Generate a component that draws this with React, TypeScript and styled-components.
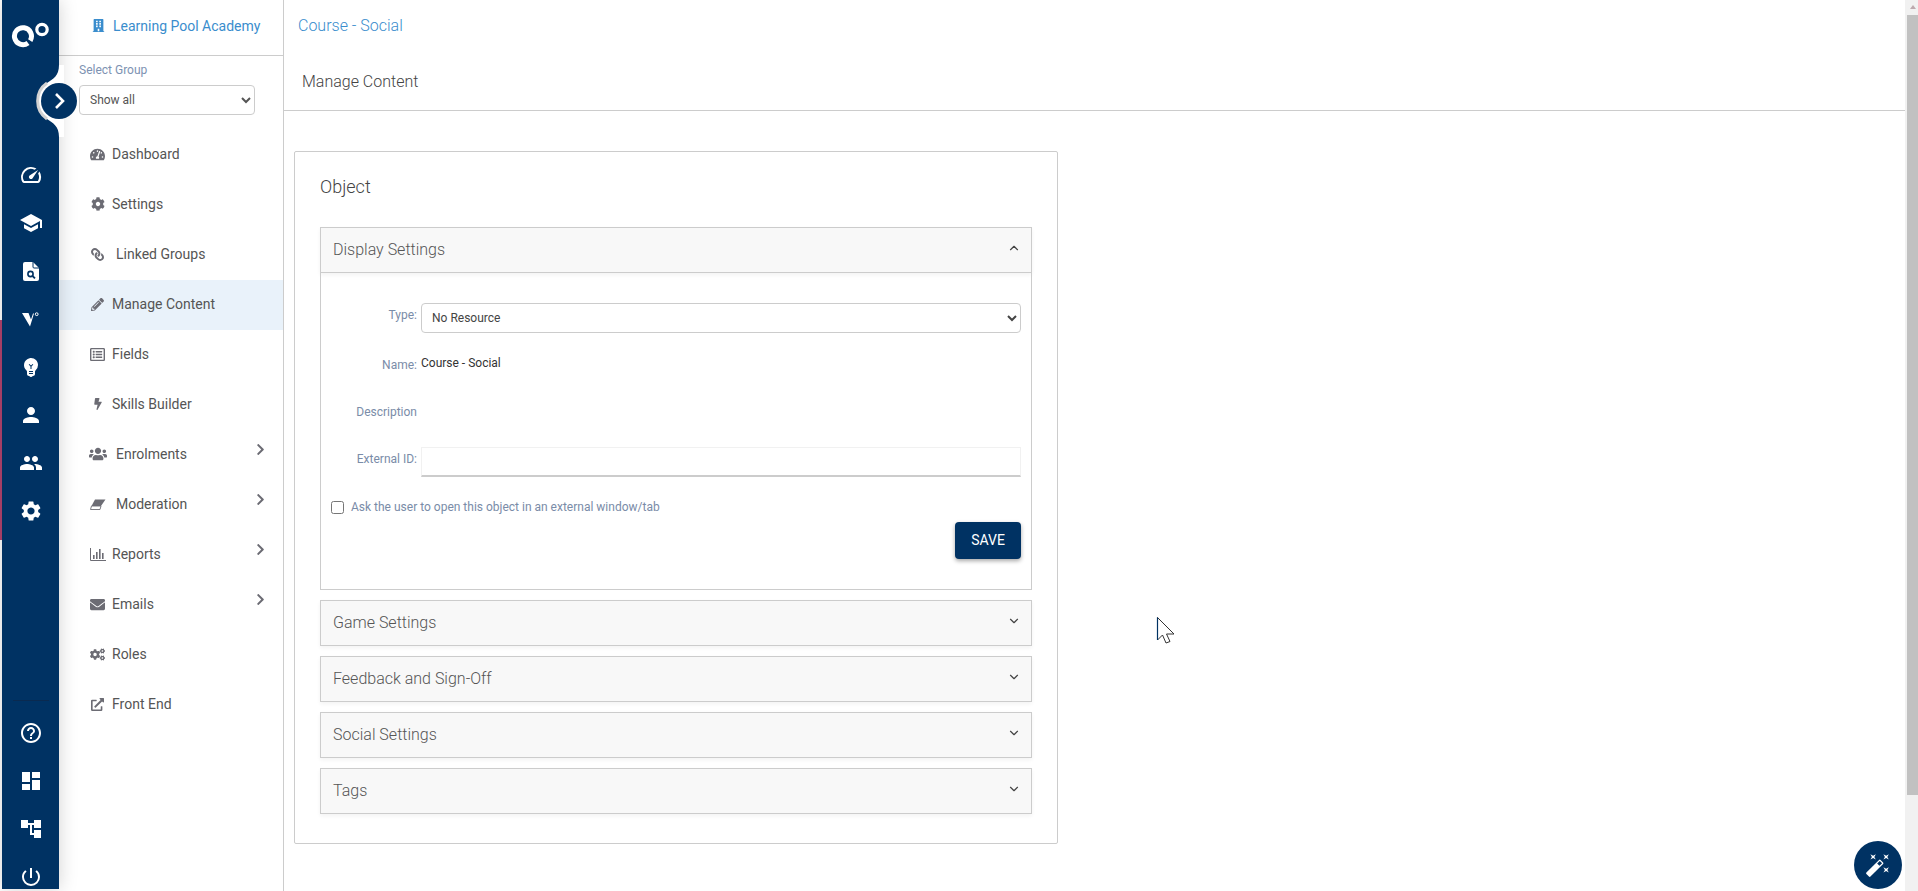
import React from 'react';
import styled, { createGlobalStyle } from 'styled-components';
import { ChevronDown, ChevronUp } from 'lucide-react';
import {
    FaBolt,
    FaBuilding,
    FaChevronRight,
    FaCog,
    FaCogs,
    FaEnvelope,
    FaExternalLinkAlt,
    FaLink,
    FaPencilAlt,
    FaRegListAlt,
    FaTachometerAlt,
    FaUsers,
} from 'react-icons/fa';
import {
    MdAccountTree,
    MdAutoFixHigh,
    MdDashboard,
    MdEmojiObjects,
    MdHelpOutline,
    MdPeople,
    MdPerson,
    MdPowerSettingsNew,
    MdSchool,
    MdSettings,
    MdSpeed,
} from 'react-icons/md';

const navy = '#003263';

const GlobalStyle = createGlobalStyle`
    html, body {
        margin: 0;
        padding: 0;
        height: 100%;
        overflow: hidden;
        background: #fff;
    }
    body {
        font-family: 'Roboto', 'Liberation Sans', sans-serif;
    }
    * {
        box-sizing: border-box;
    }
`;

const Page = styled.div`
    position: relative;
    display: flex;
    width: 1918px;
    height: 891px;
    overflow: hidden;
    background: #fff;
`;

const Strip = styled.div`
    width: 2px;
    padding-top: 320px;
    flex-shrink: 0;
`;

const StripMark = styled.div`
    height: 220px;
    background: #b4446f;
`;

const Rail = styled.aside`
    position: relative;
    z-index: 2;
    width: 57px;
    flex-shrink: 0;
    height: 889px;
    background: ${navy};
    box-shadow: 0 0 18px rgba(0, 0, 0, 0.18);
    display: flex;
    flex-direction: column;
    align-items: center;
    color: #fff;
`;

const LogoBox = styled.div`
    height: 151px;
    padding-top: 18px;
    flex-shrink: 0;
`;

const RailIcon = styled.div`
    height: 48px;
    width: 100%;
    flex-shrink: 0;
    display: flex;
    align-items: center;
    justify-content: center;
    font-size: 24px;
`;

const RailGroup = styled.div`
    width: 100%;
    flex-shrink: 0;
`;

const RailRule = styled.div`
    width: 36px;
    height: 1px;
    flex-shrink: 0;
    background: #0a2a50;
    margin-top: 165px;
    margin-bottom: 8px;
`;

const Toggle = styled.svg`
    position: absolute;
    left: 32px;
    top: 56px;
    z-index: 3;
    overflow: visible;
`;

const Sidebar = styled.nav`
    width: 225px;
    flex-shrink: 0;
    height: 100%;
    border-right: 1px solid #ccc;
`;

const AcademyBar = styled.div`
    height: 56px;
    border-bottom: 1px solid #ccc;
    padding-left: 33px;
    display: flex;
    align-items: center;
    gap: 8px;
    color: #3a8dcd;
    font-size: 14px;
    padding-bottom: 4px;
`;

const GroupBlock = styled.div`
    padding: 6px 0 0 20px;
    height: 74px;
`;

const GroupLabel = styled.div`
    font-size: 12px;
    line-height: 16px;
    color: #7d92b2;
    margin-bottom: 7px;
`;

const GroupSelect = styled.select`
    display: block;
    width: 176px;
    height: 30px;
    font-family: 'Roboto', sans-serif;
    font-size: 12px;
    color: #555;
    background: #fff;
    border: 1px solid #ccc;
    border-radius: 4px;
    padding-left: 6px;
`;

const NavList = styled.ul`
    list-style: none;
    margin: 0;
    padding: 0;
`;

const NavItem = styled.li<{ $active?: boolean }>`
    position: relative;
    height: 50px;
    display: flex;
    align-items: center;
    padding: 0 0 2px 31px;
    font-size: 14px;
    color: #555;
    background: ${(p) => (p.$active ? '#e9f2fa' : 'transparent')};
`;

const NavIcon = styled.span<{ $wide?: boolean; $size?: number; $flip?: boolean }>`
    width: 15px;
    display: flex;
    justify-content: center;
    margin-right: ${(p) => (p.$wide ? '11px' : '7px')};
    color: #6c6c74;
    font-size: ${(p) => p.$size ?? 14}px;
    transform: ${(p) => (p.$flip ? 'scaleX(-1)' : 'none')};

    svg {
        flex-shrink: 0;
    }
`;

const NavArrow = styled.span`
    margin-left: auto;
    margin-right: 16px;
    margin-bottom: 10px;
    color: #6c6c74;
    font-size: 13px;
    display: flex;
`;

const Main = styled.main`
    flex: 1;
    height: 100%;
    min-width: 0;
`;

const TopBar = styled.header`
    height: 111px;
    border-bottom: 1px solid #ccc;
`;

const CourseTitle = styled.div`
    height: 54px;
    padding: 16px 0 0 14px;
    font-size: 16px;
    line-height: 19px;
    font-weight: 300;
    color: #3a8dcd;
`;

const PageTitle = styled.div`
    padding: 18px 0 0 18px;
    font-size: 16px;
    line-height: 19px;
    font-weight: 300;
    color: #444;
`;

const Card = styled.section`
    width: 764px;
    height: 693px;
    margin: 40px 0 0 10px;
    padding: 0 25px;
    border: 1px solid #ccc;
    border-radius: 2px;
`;

const CardTitle = styled.h2`
    margin: 0;
    height: 75px;
    padding-top: 24px;
    font-size: 18px;
    line-height: 22px;
    font-weight: 300;
    color: #444;
`;

const Panel = styled.div`
    margin-bottom: 10px;
    width: 712px;
`;

const PanelHeader = styled.div`
    height: 46px;
    padding: 0 10px 2px 12px;
    display: flex;
    align-items: center;
    justify-content: space-between;
    background: #f8f8f8;
    border: 1px solid #ccc;
    font-size: 16px;
    font-weight: 300;
    color: #555;
    box-shadow: 0 2px 4px rgba(0, 0, 0, 0.05);
`;

const PanelChevron = styled.span`
    display: flex;
    margin-bottom: 2px;
    color: #444;
`;

const PanelBody = styled.div`
    height: 317px;
    padding: 30px 10px 0 0;
    border: 1px solid #ccc;
    border-top: none;
`;

const FormRow = styled.div<{ $height: number }>`
    display: flex;
    height: ${(p) => p.$height}px;
    gap: 4px;
`;

const FieldLabel = styled.label<{ $offset?: number }>`
    width: 96px;
    flex-shrink: 0;
    text-align: right;
    font-size: 12px;
    line-height: 14px;
    color: #7a8ca8;
    padding-top: ${(p) => p.$offset ?? 0}px;
`;

const FieldValue = styled.div`
    font-size: 12px;
    line-height: 14px;
    color: #333;
    padding-top: 6px;
`;

const TypeSelect = styled.select`
    width: 600px;
    height: 30px;
    font-family: 'Roboto', sans-serif;
    font-size: 12px;
    color: #444;
    background: #fff;
    border: 1px solid #ccc;
    border-radius: 4px;
    padding-left: 6px;
`;

const TextField = styled.input`
    width: 600px;
    height: 30px;
    border: 1px solid #f1f1f1;
    border-bottom: 2px solid #ccc;
    outline: none;
    background: #fff;
`;

const CheckRow = styled.label`
    display: flex;
    align-items: center;
    gap: 7px;
    height: 14px;
    margin: 23px 0 0 10px;
    font-size: 12px;
    color: #7a8ca8;
`;

const CheckBox = styled.input`
    width: 13px;
    height: 13px;
    margin: 0;
`;

const SaveRow = styled.div`
    display: flex;
    justify-content: flex-end;
    margin-top: 8px;
`;

const SaveButton = styled.button`
    width: 66px;
    height: 37px;
    border: none;
    border-radius: 4px;
    background: ${navy};
    color: #fff;
    font-family: 'Roboto', sans-serif;
    font-size: 14px;
    font-weight: 400;
    padding-bottom: 3px;
    box-shadow: 0 2px 4px rgba(0, 0, 0, 0.35);
`;

const ScrollTrack = styled.div`
    width: 13px;
    flex-shrink: 0;
    height: 100%;
    background: #f1f1f1;
    padding-left: 2px;
`;

const ScrollArrow = styled.div`
    height: 15px;
    padding: 5px 0 0 3px;

    &::before {
        content: '';
        display: block;
        width: 0;
        height: 0;
        border-left: 3.5px solid transparent;
        border-right: 3.5px solid transparent;
        border-bottom: 4px solid #bda9ae;
    }
`;

const ScrollThumb = styled.div`
    height: 780px;
    background: #c1c1c1;
`;

const Fab = styled.button`
    position: absolute;
    left: 1854px;
    top: 841px;
    width: 48px;
    height: 48px;
    border: none;
    border-radius: 50%;
    background: ${navy};
    color: #fff;
    font-size: 26px;
    display: flex;
    align-items: center;
    justify-content: center;
    padding: 0;
`;

const Pointer = styled.svg`
    position: absolute;
    left: 1156px;
    top: 616px;
`;

const BarsIcon = () => (
    <svg width="16" height="13" viewBox="0 0 16 13">
        <path d="M0.5 0V12.5H16" fill="none" stroke="currentColor" />
        <path d="M3 7h1.6v4H3zM6 4h1.6v7H6zM9 1h1.6v10H9zM12 5h1.6v6H12z" fill="currentColor" />
    </svg>
);

const EraserIcon = () => (
    <svg width="16" height="11" viewBox="0 0 16 11">
        <path d="M5 0.5H15.5L11 7H1.5z" fill="currentColor" />
        <path d="M1.5 7H11L10 10.5H0.5z" fill="none" stroke="currentColor" strokeWidth="0.9" />
    </svg>
);

const navItems = [
    { label: 'Dashboard', icon: <FaTachometerAlt />, size: 15 },
    { label: 'Settings', icon: <FaCog /> },
    { label: 'Linked Groups', icon: <FaLink />, wide: true, flip: true, size: 13 },
    { label: 'Manage Content', icon: <FaPencilAlt />, size: 13 },
    { label: 'Fields', icon: <FaRegListAlt />, size: 15 },
    { label: 'Skills Builder', icon: <FaBolt />, size: 12 },
    { label: 'Enrolments', icon: <FaUsers />, wide: true, arrow: true, size: 18 },
    { label: 'Moderation', icon: <EraserIcon />, wide: true, arrow: true },
    { label: 'Reports', icon: <BarsIcon />, arrow: true },
    { label: 'Emails', icon: <FaEnvelope />, arrow: true, size: 15 },
    { label: 'Roles', icon: <FaCogs />, size: 15 },
    { label: 'Front End', icon: <FaExternalLinkAlt />, size: 13 },
];

const closedPanels = ['Game Settings', 'Feedback and Sign-Off', 'Social Settings', 'Tags'];

const Logo = () => (
    <svg width="40" height="32" viewBox="0 0 40 32" fill="none">
        <path d="M17 25A8.5 8.5 0 1 1 19.2 22.6" stroke="#fff" strokeWidth="5" />
        <circle cx="31" cy="11.5" r="5.2" stroke="#fff" strokeWidth="3.2" />
    </svg>
);

const VenueMark = () => (
    <svg width="17" height="15" viewBox="0 0 17 15">
        <path d="M0 1H6.5L9 7.5L11 1.5H12L8 14.5Z" fill="#fff" />
        <circle cx="14.7" cy="2.2" r="1.4" fill="none" stroke="#fff" strokeWidth="1" />
    </svg>
);

const DocSearchIcon = () => (
    <svg width="16" height="19" viewBox="0 0 16 19">
        <path d="M2 0H10L16 6V17a2 2 0 0 1-2 2H2a2 2 0 0 1-2-2V2a2 2 0 0 1 2-2Z" fill="#fff" />
        <path d="M10 0V5a1 1 0 0 0 1 1H16" fill="none" stroke={navy} />
        <circle cx="7.5" cy="12" r="2.6" fill="none" stroke={navy} strokeWidth="1.6" />
        <path d="M9.5 14L12 16.3" stroke={navy} strokeWidth="1.8" />
    </svg>
);

const App = () => {
    return (
        <Page>
            <GlobalStyle />
            <Strip>
                <StripMark />
            </Strip>
            <Rail>
                <LogoBox>
                    <Logo />
                </LogoBox>
                <RailIcon><MdSpeed /></RailIcon>
                <RailIcon><MdSchool /></RailIcon>
                <RailIcon><DocSearchIcon /></RailIcon>
                <RailIcon><VenueMark /></RailIcon>
                <RailIcon><MdEmojiObjects /></RailIcon>
                <RailIcon><MdPerson /></RailIcon>
                <RailIcon><MdPeople /></RailIcon>
                <RailIcon><MdSettings /></RailIcon>
                <RailRule />
                <RailGroup>
                    <RailIcon><MdHelpOutline /></RailIcon>
                    <RailIcon><MdDashboard /></RailIcon>
                    <RailIcon><MdAccountTree /></RailIcon>
                    <RailIcon><MdPowerSettingsNew /></RailIcon>
                </RailGroup>
                <Toggle width="48" height="90" viewBox="0 0 48 90">
                    <path d="M25 9 C25 20 19 23 13 27 A22 22 0 0 0 13 63 C19 67 25 70 25 81 L30 81 L30 9 Z" fill="#fff" />
                    <path d="M13 27 A22 22 0 0 0 13 63" fill="none" stroke="#d2d2d2" strokeWidth="3" />
                    <circle cx="25" cy="45" r="18" fill={navy} />
                    <path d="M22 38 L29 45 L22 52" fill="none" stroke="#fff" strokeWidth="2.6" />
                </Toggle>
            </Rail>
            <Sidebar>
                <AcademyBar>
                    <FaBuilding size={13} />
                    Learning Pool Academy
                </AcademyBar>
                <GroupBlock>
                    <GroupLabel>Select Group</GroupLabel>
                    <GroupSelect defaultValue="all">
                        <option value="all">Show all</option>
                    </GroupSelect>
                </GroupBlock>
                <NavList>
                    {navItems.map((item, index) => (
                        <NavItem key={index} $active={item.label === 'Manage Content'}>
                            <NavIcon $wide={item.wide} $size={item.size} $flip={item.flip}>{item.icon}</NavIcon>
                            {item.label}
                            {item.arrow && (
                                <NavArrow><FaChevronRight /></NavArrow>
                            )}
                        </NavItem>
                    ))}
                </NavList>
            </Sidebar>
            <Main>
                <TopBar>
                    <CourseTitle>Course - Social</CourseTitle>
                    <PageTitle>Manage Content</PageTitle>
                </TopBar>
                <Card>
                    <CardTitle>Object</CardTitle>
                    <Panel>
                        <PanelHeader>
                            Display Settings
                            <PanelChevron><ChevronUp size={14} /></PanelChevron>
                        </PanelHeader>
                        <PanelBody>
                            <FormRow $height={47}>
                                <FieldLabel $offset={5}>Type:</FieldLabel>
                                <TypeSelect defaultValue="none">
                                    <option value="none">No Resource</option>
                                </TypeSelect>
                            </FormRow>
                            <FormRow $height={49}>
                                <FieldLabel $offset={8}>Name:</FieldLabel>
                                <FieldValue>Course - Social</FieldValue>
                            </FormRow>
                            <FormRow $height={48}>
                                <FieldLabel $offset={6}>Description</FieldLabel>
                            </FormRow>
                            <FormRow $height={30}>
                                <FieldLabel $offset={5}>External ID:</FieldLabel>
                                <TextField />
                            </FormRow>
                            <CheckRow>
                                <CheckBox type="checkbox" />
                                Ask the user to open this object in an external window/tab
                            </CheckRow>
                            <SaveRow>
                                <SaveButton>SAVE</SaveButton>
                            </SaveRow>
                        </PanelBody>
                    </Panel>
                    {closedPanels.map((title) => (
                        <Panel key={title}>
                            <PanelHeader>
                                {title}
                                <PanelChevron><ChevronDown size={14} /></PanelChevron>
                            </PanelHeader>
                        </Panel>
                    ))}
                </Card>
            </Main>
            <ScrollTrack>
                <ScrollArrow />
                <ScrollThumb />
            </ScrollTrack>
            <Fab><MdAutoFixHigh /></Fab>
            <Pointer width="20" height="30" viewBox="0 0 20 30">
                <path d="M1.5 1.5 V24 L6.5 19 L10 27 L14 25.5 L10.5 18 H18 Z" fill="#fff" stroke="#333" strokeWidth="1" />
                <path d="M1.5 1.5 V24" stroke={navy} strokeWidth="1.2" fill="none" />
            </Pointer>
        </Page>
    );
};

export default App;
